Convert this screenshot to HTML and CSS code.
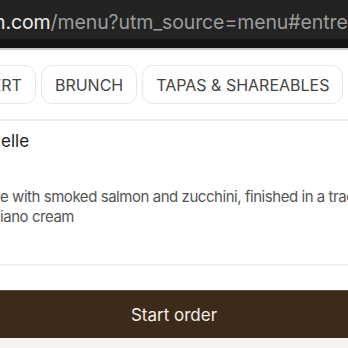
FILE: index.html
```html
<!DOCTYPE html>
<html>
<head>
<meta charset="utf-8">
<link rel="stylesheet" href="styles.css">
</head>
<body>
<div class="urlbar"><span class="url"><span class="host">n.com</span>/menu?utm_source=menu#entrees</span></div>
<div class="tabstrip"></div>
<main class="page">
  <nav class="chips">
    <span class="chip">DESSERT</span>
    <span class="chip">BRUNCH</span>
    <span class="chip">TAPAS &amp; SHAREABLES</span>
    <span class="chip">DRINKS</span>
  </nav>
  <div class="item">
    <h2 class="item-title">elle</h2>
    <p class="item-desc">e with smoked salmon and zucchini, finished in a traditional<br>iano cream</p>
  </div>
  <div class="footer">
    <button class="order">Start order</button>
  </div>
</main>
</body>
</html>
```
FILE: styles.css
```css
html, body {
  margin: 0;
  padding: 0;
  background: #ffffff;
  overflow: hidden;
  width: 348px;
  height: 348px;
}
body {
  font-family: Inter, "Noto Sans", sans-serif;
}
.urlbar {
  height: 39px;
  background: #232323;
  display: flex;
  align-items: center;
  overflow: hidden;
  white-space: nowrap;
}
.url {
  margin-left: -6px;
  margin-top: 5px;
  font-size: 19.5px;
  color: #9c9c9c;
  letter-spacing: -0.1px;
}
.host {
  color: #ececec;
}
.tabstrip {
  height: 9px;
  background: #141414;
  border-bottom: 2px solid #c9c9c9;
}
.page {
  display: flex;
  flex-direction: column;
}
.chips {
  display: flex;
  gap: 5px;
  margin-top: 15px;
  margin-left: -64px;
  padding-bottom: 15px;
  border-bottom: 2px solid #ececec;
  white-space: nowrap;
}
.chip {
  flex: none;
  height: 37px;
  padding: 0 13px;
  border: 1px solid #e6e6e6;
  border-radius: 11px;
  display: flex;
  align-items: center;
  font-size: 16px;
  color: #454545;
}
.item {
  border-bottom: 2px solid #f2f2f2;
  padding-bottom: 37px;
}
.item-title {
  margin: 8px 0 0 1px;
  font-size: 17px;
  line-height: 24px;
  font-weight: 400;
  color: #1a1a1a;
}
.item-desc {
  margin: 34px 0 0 0;
  font-size: 15px;
  line-height: 20px;
  letter-spacing: -0.45px;
  color: #555555;
  white-space: nowrap;
}
.footer {
  margin-top: 24px;
  background: #f6f3ee;
  height: 58px;
}
.order {
  display: block;
  width: 100%;
  height: 48px;
  border: 0;
  border-top: 1px solid #5e4f42;
  background: #3c2a1b;
  color: #f4efe7;
  font-family: Inter, "Noto Sans", sans-serif;
  font-size: 17px;
  padding: 0;
}
```
